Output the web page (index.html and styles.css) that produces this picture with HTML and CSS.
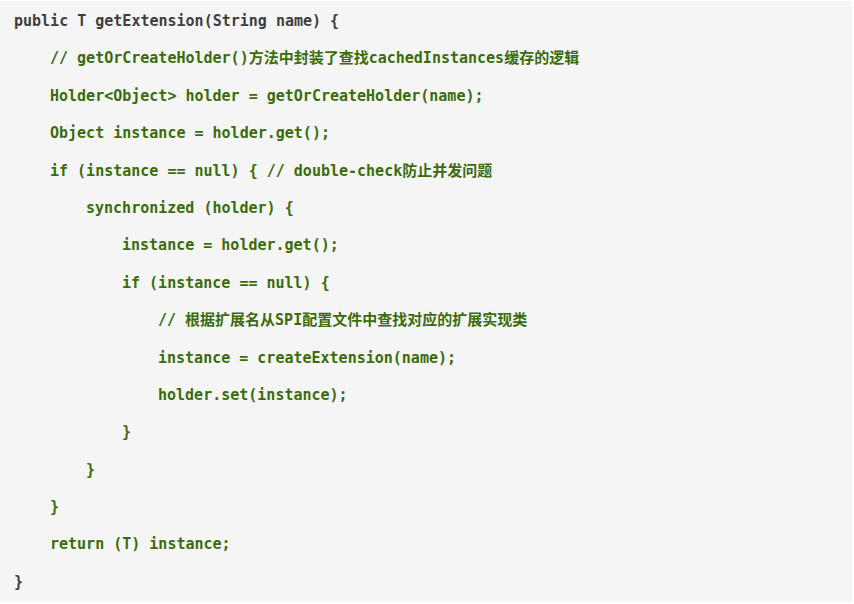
FILE: index.html
```html
<!DOCTYPE html>
<html>
<head>
<meta charset="utf-8">
<link rel="stylesheet" href="styles.css">
</head>
<body>
<div class="code">
<div class="line plain">public T getExtension(String name) {</div>
<div class="line i1">// getOrCreateHolder()方法中封装了查找cachedInstances缓存的逻辑</div>
<div class="line i1">Holder&lt;Object&gt; holder = getOrCreateHolder(name);</div>
<div class="line i1">Object instance = holder.get();</div>
<div class="line i1">if (instance == null) { // double-check防止并发问题</div>
<div class="line i2">synchronized (holder) {</div>
<div class="line i3">instance = holder.get();</div>
<div class="line i3">if (instance == null) {</div>
<div class="line i4">// 根据扩展名从SPI配置文件中查找对应的扩展实现类</div>
<div class="line i4">instance = createExtension(name);</div>
<div class="line i4">holder.set(instance);</div>
<div class="line i3">}</div>
<div class="line i2">}</div>
<div class="line i1">}</div>
<div class="line i1">return (T) instance;</div>
<div class="line plain">}</div>
</div>
</body>
</html>
```
FILE: styles.css
```css
html, body {
  margin: 0;
  padding: 0;
  background: #ffffff;
}
.code {
  margin: 1px 2px 0 0;
  height: 601px;
  box-sizing: border-box;
  background: #f5f5f5;
  padding: 2px 0 0 14px;
  font-family: "DejaVu Sans Mono", "Noto Sans CJK SC", monospace;
  font-weight: bold;
  font-size: 15px;
  color: #3a6c0c;
}
.line {
  height: 37.4px;
  line-height: 37.4px;
  white-space: pre;
}
.plain { color: #3e3e3e; }
.i1 { padding-left: 36px; }
.i2 { padding-left: 72px; }
.i3 { padding-left: 108px; }
.i4 { padding-left: 144px; }
```
